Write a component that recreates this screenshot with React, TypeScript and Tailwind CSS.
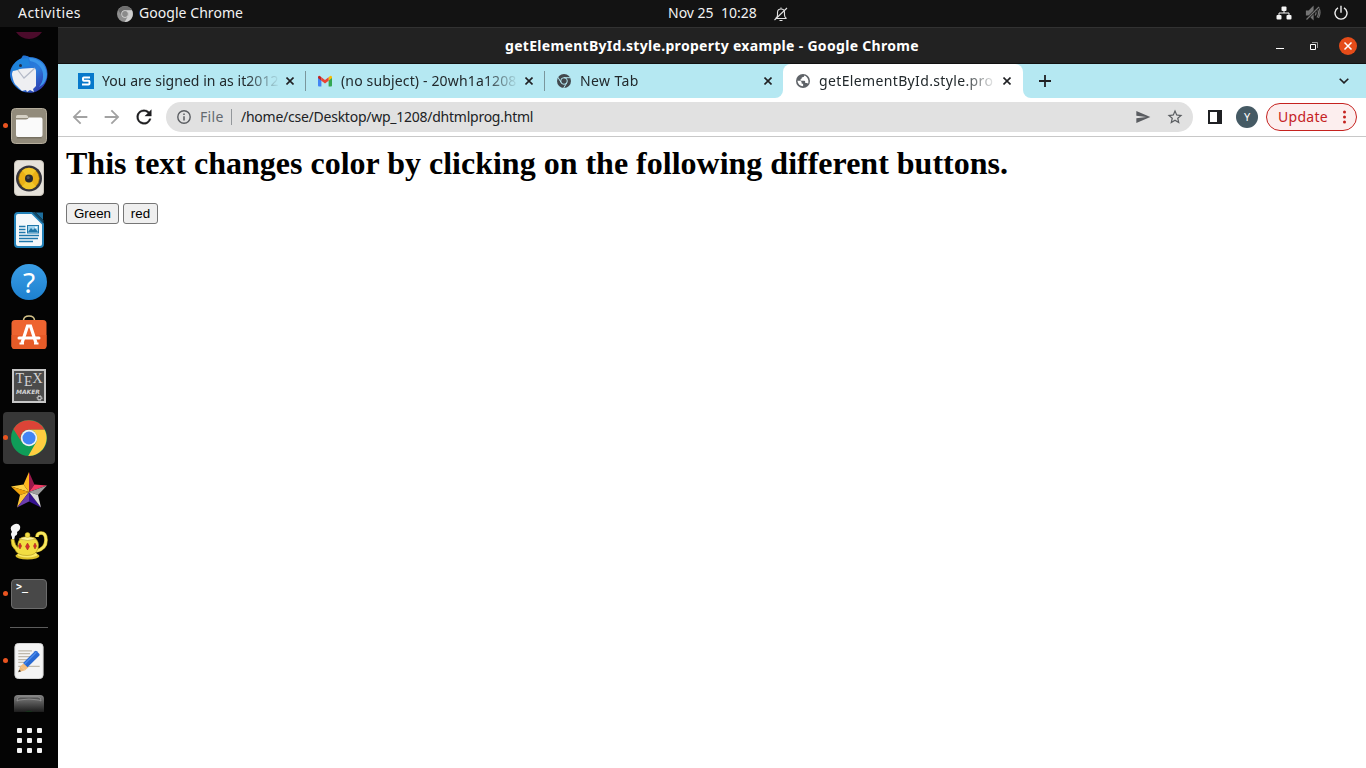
import type { ReactNode } from "react";

const UI = "font-['Noto_Sans',sans-serif]";

function ChromeLogo({ size, mono = false }: { size: number; mono?: boolean }) {
  const c = mono
    ? ["#6e6e6e", "#cfcfcf", "#8e8e8e", "#d9d9d9", "#8a8a8a"]
    : ["#db4437", "#ffcd40", "#0f9d58", "#f1f1f1", "#4285f4"];
  return (
    <svg width={size} height={size} viewBox="0 0 48 48">
      <circle cx="24" cy="24" r="24" fill={c[2]} />
      <path d="M3.2 12A24 24 0 0 1 44.8 13H24a11 11 0 0 0-9.6 16.5z" fill={c[0]} />
      <path d="M44.8 13A24 24 0 0 1 23 48l10.5-18.500A11 11 0 0 0 24 13z" fill={c[1]} />
      <circle cx="24" cy="24" r="11" fill={c[3]} />
      <circle cx="24" cy="24" r="8.700" fill={c[4]} />
    </svg>
  );
}

function DockItem({ children, running = false, active = false }: { children: ReactNode; running?: boolean; active?: boolean }) {
  return (
    <div className="relative flex h-[52px] w-full shrink-0 items-center justify-center">
      {active && <div className="absolute inset-y-0 left-[3px] w-[52px] rounded-[4px] bg-[#373737]" />}
      {running && <div className="absolute left-[3px] top-[23px] h-[5px] w-[5px] rounded-full bg-[#e95420]" />}
      <div className="relative">{children}</div>
    </div>
  );
}

function Thunderbird() {
  return (
    <svg width="40" height="40" viewBox="0 0 40 40" className="block">
      <defs>
        <linearGradient id="tb" x1="0" y1="0" x2="1" y2="1">
          <stop offset="0" stopColor="#1c6fd0" />
          <stop offset=".55" stopColor="#2b7bdc" />
          <stop offset="1" stopColor="#30209a" />
        </linearGradient>
      </defs>
      <path d="M14 1.500c3 0 5 .5 6 1.500C31 3 38.500 10 38.500 20c0 10-6 16-14 18.500-9 1-14-2-18-6C2 28 0 22 1.500 16 3 11 7 7 11 5c2-1 2-2.500 3-3.500z" fill="url(#tb)" />
      <path d="M21 7c8 1 14 8 13 16 0 4-2 7-4 10 6-3 8-8 8-13C37 10 29 4 20 4z" fill="#3b96ea" />
      <path d="M3 21c0-4 2-6 5-6l15-1c3 0 4 1 4 3v15l-3 3 1 3-4-2-3 2-1-2-4 1-5-5c-3-2-4-6-5-11z" fill="#eeeff2" />
      <path d="m8 15 7 9 11-10" fill="none" stroke="#b4bac8" strokeWidth="1.200" />
      <path d="M11 5c-5 3-8 7-8 12 3 0 6-1 10-3 2-1 4-2 8-2l-2-8z" fill="#1f83da" />
      <circle cx="11.500" cy="11.500" r="1.500" fill="#252d45" />
    </svg>
  );
}

function Files() {
  return (
    <svg width="38" height="38" viewBox="0 0 38 38" className="block">
      <rect x="1.500" y="1.500" width="35" height="35" rx="4" fill="#928b7b" stroke="#b4ac9b" />
      <path d="M6 11V9.500Q6 8 7.500 8H16q1.500 0 2 1.500l.5 1.500z" fill="#d6d1c5" />
      <path d="M6 12.500h10q2 0 3-2h12q1.500 0 1.500 2V28q0 2-2 2H8q-2 0-2-2z" fill="#fafafa" />
      <path d="M7 30.800h24.500" stroke="#6b6557" />
    </svg>
  );
}

function Rhythmbox() {
  return (
    <svg width="30" height="36" viewBox="0 0 30 36" className="block">
      <rect x=".5" y=".5" width="29" height="35" rx="3.500" fill="#e6e2da" stroke="#c9c4b9" />
      <circle cx="15" cy="18.500" r="13" fill="#34343c" />
      <circle cx="15" cy="18.500" r="10.500" fill="#eab116" stroke="#735611" strokeWidth=".7" />
      <path d="M15 18.500 8 10.500a10.500 10.500 0 0 1 14 0zM15 18.500l7 8a10.500 10.500 0 0 1-14 0z" fill="#f2c72a" />
      <circle cx="15" cy="18.500" r="4" fill="#282a2e" />
      <circle cx="14.200" cy="17.500" r="1.500" fill="#50545a" />
    </svg>
  );
}

function Writer() {
  return (
    <svg width="30" height="36" viewBox="0 0 30 36" className="block">
      <path d="M4 1h14l11 11v20q0 3-3 3H4q-3 0-3-3V4q0-3 3-3z" fill="#f4f8fb" stroke="#2381b8" strokeWidth="2" />
      <path d="M21.500 .5h7.500v7.500z" fill="#1d6d9c" />
      <path d="m18 0 11.500 11.500V8.500L21 0z" fill="#134866" />
      <g stroke="#1f78ac" strokeWidth="1.300">
        <path d="M5 14.500h6.500M5 17.500h6.500M5 20.500h6.500M5 23.500h20M5 26.500h19M5 29.500h14" />
      </g>
      <rect x="13.500" y="13.500" width="11" height="7.500" fill="#9fd3ee" stroke="#2178aa" />
      <path d="m14 20 3-4 2 2 2-2 3 4z" fill="#2076a8" />
      <circle cx="22" cy="15.500" r="1" fill="#fff" />
    </svg>
  );
}

function Software() {
  return (
    <svg width="38" height="38" viewBox="0 0 38 38" className="block">
      <path d="M13.500 7V5Q14 1 19 1t5.500 4v2" fill="none" stroke="#d6c58b" strokeWidth="1.600" />
      <rect x="1.500" y="5" width="35" height="29" rx="3.500" fill="#ee6430" />
      <path d="M1.500 20h35v10.500q0 3.500-3.500 3.500H5q-3.500 0-3.500-3.500z" fill="#e65b28" />
      <path d="m12 28 5.500-17h3l5.500 17" fill="none" stroke="#fff" strokeWidth="3.200" />
      <path d="M9 23h20" stroke="#fff" strokeWidth="3" strokeLinecap="round" />
      <path d="M9.500 28.500h4.500M24 28.500h4.500" stroke="#fff" strokeWidth="2" />
    </svg>
  );
}

function TexMaker() {
  return (
    <div className="flex h-[34px] w-[34px] flex-col border-2 border-[#c7c7c7] bg-[#4b4b4b] font-['Liberation_Serif',serif] text-[#d4d4d4]">
      <div className="flex justify-center pt-[1px] text-[14px] leading-[14px]">
        <span>T</span>
        <span className="pt-[3px]">E</span>
        <span>X</span>
      </div>
      <div className="pl-[2px] font-['DejaVu_Sans',sans-serif] text-[6px] font-bold italic leading-[6px]">MAKER</div>
      <svg className="ml-auto mr-[1px]" width="7" height="7" viewBox="0 0 7 7">
        <circle cx="3.500" cy="3.500" r="2" fill="none" stroke="#d5d5d5" strokeWidth="1.200" />
        <circle cx="3.500" cy="3.500" r="3" fill="none" stroke="#d5d5d5" strokeDasharray="1.200 1.150" />
      </svg>
    </div>
  );
}

function StarIcon() {
  return (
    <svg width="38" height="36" viewBox="0 0 38 36" className="block">
      <path d="m19 0-5.500 12.500L19 20z" fill="#ffb71e" />
      <path d="m19 0 5.500 12.500L19 20z" fill="#99184c" />
      <path d="m1 14.500 12.500-2L19 20z" fill="#ffd043" />
      <path d="m1 14.500 9 8.500 9-3z" fill="#eea10c" />
      <path d="m37 13.500-12.500-1L19 20z" fill="#f53a65" />
      <path d="m37 13.500-9 9.500-9-3z" fill="#9d9d9d" />
      <path d="m10 23-3 12.500L19 20z" fill="#ffc83a" />
      <path d="m7 35.500 12-6V20z" fill="#6b3cac" />
      <path d="M19 20v9.500l12 6z" fill="#35128f" />
      <path d="M31 35.500 28 23l-9-3z" fill="#dadada" />
    </svg>
  );
}

function Teapot() {
  return (
    <svg width="40" height="38" viewBox="0 0 40 38" className="block">
      <path d="M3 14q-2-3 0-5-3-5 1-7 5-3 7 1 1 4-3 6 1 3-2 4l-1 4H3z" fill="#f5f5f5" />
      <path d="M28 14q0-4 4-4 5 0 5 7 0 9-10 11" fill="none" stroke="#c4a920" strokeWidth="3.600" />
      <path d="M28 14q0-4 4-4 5 0 5 7 0 9-10 11" fill="none" stroke="#f8ea62" strokeWidth="2.400" />
      <ellipse cx="18.500" cy="33" rx="12" ry="3.500" fill="#dbbf28" />
      <ellipse cx="18.500" cy="31.500" rx="10" ry="3" fill="#faea68" />
      <path d="M2 16.500h3q1 6 4 8-1-7 4-10h12q6 4 4 11-2 7-11 7-10 0-12-6-4-3-4-10z" fill="#f2dd42" stroke="#b89e20" strokeWidth=".7" />
      <path d="M10 16q8-5 17 0-8 3-17 0z" fill="#fdf39b" stroke="#b89e20" strokeWidth=".6" />
      <circle cx="18.500" cy="12" r="2.500" fill="#f2dd42" stroke="#b89e20" strokeWidth=".5" />
      <path d="m11 20 1.600 3-1.600 3-1.500-3zM18.500 20l2 3.500-2 3.500-2-3.500zM26 20l1.500 3-1.500 3-1.500-3z" fill="#d72d2d" stroke="#9d2416" strokeWidth=".5" />
    </svg>
  );
}

function Editor() {
  return (
    <svg width="30" height="36" viewBox="0 0 30 37" className="block">
      <rect x=".5" y=".5" width="29" height="36" rx="3.500" fill="#f4f4f4" stroke="#d8d8d8" />
      <path d="M4 8h14M4 11h12M4 14h14M4 17h13M4 20h9M4 24h22" stroke="#bfb9ac" strokeWidth="1.300" />
      <path d="m4 30 2-6 5 4z" fill="#edb877" />
      <path d="m4 30 .8-2.500L7 29z" fill="#333" />
      <path d="m6 24 4-3.500 4.500 4.500-3.500 3z" fill="#f5bd7b" />
      <path d="M9 20.500 21 8.500q1-1 2 0l2.500 2.500q1 1 0 2l-12 12z" fill="#2869d3" />
      <path d="m10.500 21.500 12-12" stroke="#4b8bed" strokeWidth="1.500" />
    </svg>
  );
}

function Dock() {
  return (
    <aside className="flex w-[58px] shrink-0 flex-col items-center bg-[#040404]">
      <div className="flex h-[21px] w-full shrink-0 flex-col items-center pt-[5px]">
        <svg width="26" height="7" viewBox="0 0 26 7"><path d="M0 0h26q-5 7-13 7T0 0z" fill="#4b0b2b" /></svg>
      </div>
      <DockItem><Thunderbird /></DockItem>
      <DockItem running><Files /></DockItem>
      <DockItem><Rhythmbox /></DockItem>
      <DockItem><Writer /></DockItem>
      <DockItem>
        <div className="flex h-[36px] w-[36px] items-center justify-center rounded-full bg-linear-to-b from-[#3a9ee6] to-[#1c80cf] pb-[1px] font-['Noto_Sans',sans-serif] text-[28px] leading-none text-white">?</div>
      </DockItem>
      <DockItem><Software /></DockItem>
      <DockItem><TexMaker /></DockItem>
      <DockItem running active><div className="[&>svg]:block"><ChromeLogo size={36} /></div></DockItem>
      <DockItem><StarIcon /></DockItem>
      <DockItem><Teapot /></DockItem>
      <DockItem running>
        <div className="h-[30px] w-[36px] rounded-[4px] border border-[#6c6c6c] bg-[#484848] pl-[4px] pt-[2px] font-['DejaVu_Sans_Mono',monospace] text-[10px] font-bold leading-[10px] text-white">&gt;_</div>
      </DockItem>
      <div className="mb-[7px] mt-[7px] h-px w-[38px] shrink-0 bg-[#5c5c5c]" />
      <DockItem running><Editor /></DockItem>
      <div className="flex h-[25px] w-full shrink-0 justify-center overflow-hidden pt-[8px]">
        <svg width="30" height="17" viewBox="0 0 30 17">
          <defs><linearGradient id="disk" x1="0" y1="0" x2="0" y2="1"><stop stopColor="#858585" /><stop offset="1" stopColor="#1d1d1d" /></linearGradient></defs>
          <path d="M0 17V4q0-4 4-4h22q4 0 4 4v13z" fill="url(#disk)" />
          <path d="M3 6q0-4 3-4h18q3 0 3 4l-2-1q-10-2-20 0z" fill="#555" stroke="#9c9c9c" strokeWidth=".7" />
          <path d="M11 17q4-3 8 0z" fill="#16321b" />
        </svg>
      </div>
      <div className="mt-[16px] grid grid-cols-3 gap-[5px] pl-[1px]">
        {Array.from({ length: 9 }, (_, i) => (
          <span key={i} className="h-[5px] w-[5px] rounded-[1px] bg-[#f2f2f2]" />
        ))}
      </div>
    </aside>
  );
}

function TopBar() {
  return (
    <header className={`flex h-[27px] shrink-0 items-center bg-[#131313] pl-[18px] pr-[18px] text-[14px] leading-[26px] text-[#f2f2f2] ${UI}`}>
      <div className="flex w-[650px] shrink-0 items-center">
        <span className="w-[99px] pb-[1px] tracking-[0.47px]">Activities</span>
        <ChromeLogo size={16} mono />
        <span className="ml-[6px] pb-[1px] tracking-[0.05px]">Google Chrome</span>
      </div>
      <span className="w-[105px] shrink-0 whitespace-pre pb-[1px]">Nov 25  10:28</span>
      <svg className="shrink-0" width="16" height="16" viewBox="0 0 16 16" fill="none" stroke="#e2e2e2" strokeWidth="1.100">
        <path d="M2.500 12.500h11q-2-1-2-3.500V6.500Q11.500 3 8 3T4.500 6.500V9q0 2.500-2 3.500zM8 1.500V3M6.500 14.500h3M1.500 14 14 2" />
      </svg>
      <div className="flex flex-1 items-center justify-end gap-[13px] pb-[1px]">
        <svg width="16" height="16" viewBox="0 0 16 16" fill="#f5f5f5">
          <rect x="5.500" y="1.500" width="5" height="4.500" rx="1" /><rect x=".5" y="10" width="5" height="4.500" rx="1" /><rect x="10.500" y="10" width="5" height="4.500" rx="1" />
          <path d="M8 5v3M3 11V8h10v3" fill="none" stroke="#f5f5f5" />
        </svg>
        <svg width="16" height="16" viewBox="0 0 16 16" fill="none" stroke="#747474" strokeWidth="1.200">
          <path d="M1.500 6H4l4-4v12l-4-4H1.500z" fill="#747474" />
          <path d="M10 5.500q2 2.500 0 5M12 3.500q3 4.500 0 9M13.500 2q3 5.500 0 11" />
          <path d="M1.500 14.500 14 2" stroke="#131313" strokeWidth="2.500" /><path d="M1.500 14.500 14 2" />
        </svg>
        <svg width="14" height="16" viewBox="0 0 14 16" fill="none" stroke="#f0f0f0" strokeWidth="1.400">
          <path d="M4 2.900a6 6 0 1 0 6 0M7 .7v7" />
        </svg>
      </div>
    </header>
  );
}

function TitleBar() {
  return (
    <div className="flex h-[37px] shrink-0 items-center border-b border-t border-b-[#111] border-t-[#323232] bg-[#222]">
      <div className={`ml-[447px] flex-1 whitespace-nowrap text-[14px] font-bold tracking-[0.31px] text-white ${UI}`}>getElementById.style.property example - Google Chrome</div>
      <div className="flex items-center justify-end pr-[9px]">
        <svg width="8" height="8" viewBox="0 0 8 8"><path d="M0 6.500h8" stroke="#fff" /></svg>
        <svg className="ml-[26px]" width="8" height="8" viewBox="0 0 8 8" fill="none"><path d="M2 .5h5.500V6" stroke="#999" /><path d="M.5 2.500h5v5h-5z" stroke="#fff" /></svg>
        <svg className="ml-[21px]" width="18" height="18" viewBox="0 0 18 18"><circle cx="9" cy="9" r="9" fill="#e54c19" /><path d="m5.500 5.500 7 7m0-7-7 7" stroke="#fff" strokeWidth="1.500" /></svg>
      </div>
    </div>
  );
}

const favicons = {
  s: (
    <svg width="16" height="16" viewBox="0 0 16 16"><path d="M0 0h16v16H0z" fill="#0779cb" /><path d="M12 4.500H5.800Q5 4.500 5 5.300v1.500q0 .9.800.9h4.700q1 0 1 .9v2q0 .9-1 .9H4" fill="none" stroke="#fff" strokeWidth="2" /></svg>
  ),
  gmail: (
    <svg width="16" height="16" viewBox="0 0 16 16"><path d="M1 4v8.500q0 1 1 1h2.400V7z" fill="#4285f4" /><path d="M15 4v8.500q0 1-1 1h-2.400V7z" fill="#34a853" /><path d="M11.600 4.200 13 3q2-.8 2 1.500V5l-3.400 2.700z" fill="#fbbc04" /><path d="M4.400 4.200 8 7l3.600-2.800v3.500L8 10.400 4.400 7.700z" fill="#ea4335" /><path d="M4.400 4.200 3 3Q1 2.200 1 4.500V5l3.400 2.700z" fill="#c5221f" /></svg>
  ),
  chrome: (
    <svg width="16" height="16" viewBox="0 0 16 16"><circle cx="8" cy="8" r="7" fill="#42484d" /><circle cx="8" cy="8" r="3.300" fill="none" stroke="#b5e8f1" strokeWidth="1" /><path d="M8 4.700h6.500M5.100 9.600 1.900 4.200M10.900 9.600 7.700 15" stroke="#b5e8f1" strokeWidth="1" /></svg>
  ),
  globe: (
    <svg width="16" height="16" viewBox="0 0 16 16"><circle cx="8" cy="8" r="7" fill="#5f6368" /><path d="M9.300 2.500q.2 1.800-1.800 1.800-.9 0-.9 1.300-.2.700-1.200.8v1.300h3.800q1 .1 1 1.300v.9h1.500q.9.200 1.400.9.500-1.500.3-3-.6-4-4.100-5.300zM2.400 7.800h2.300q1.900.1 2 2v.9h1.400v2.500q-4.900-.2-5.700-5.400z" fill="#fff" /></svg>
  ),
};

function Tab({ icon, title, tracking, active = false, divider = false }: { icon: ReactNode; title: string; tracking: string; active?: boolean; divider?: boolean }) {
  return (
    <div className={`relative flex h-full shrink-0 items-center pl-[12px] ${active ? "w-[240px] rounded-t-[8px] bg-white" : "w-[239px]"}`}>
      {icon}
      <div className={`ml-[8px] w-[176px] overflow-hidden whitespace-nowrap text-[14px] leading-[20px] text-[#22292c] ${tracking} ${UI} mask-[linear-gradient(to_right,#000_144px,transparent_178px)]`}>{title}</div>
      <svg className="ml-[8px]" width="8" height="8" viewBox="0 0 8 8"><path d="m.5.5 7 7m0-7-7 7" stroke="#202124" strokeWidth="1.600" /></svg>
      {divider && <div className="absolute right-[-1px] top-[7px] h-[20px] w-px bg-[#7a969c]" />}
    </div>
  );
}

function TabStrip() {
  return (
    <div className="flex h-[34px] shrink-0 items-center bg-white">
      <div className="flex h-full w-[725px] items-center rounded-br-[8px] bg-[#b5e8f2] pl-[8px]">
        <Tab icon={favicons.s} title="You are signed in as it2012" tracking="tracking-[0.04px]" divider />
        <Tab icon={favicons.gmail} title="(no subject) - 20wh1a1208" tracking="tracking-[0.15px]" divider />
        <Tab icon={favicons.chrome} title="New Tab" tracking="tracking-[0.4px]" />
      </div>
      <div className="h-full bg-[#b5e8f2]"><Tab icon={favicons.globe} title="getElementById.style.pro" tracking="tracking-[0.36px]" active /></div>
      <div className="flex h-full flex-1 items-center justify-between rounded-bl-[8px] bg-[#b5e8f2] pl-[16px] pr-[17px]">
        <svg width="12" height="12" viewBox="0 0 12 12"><path d="M6 0v12M0 6h12" stroke="#202124" strokeWidth="1.800" /></svg>
        <svg width="10" height="6" viewBox="0 0 10 6"><path d="m.7.7 4.300 4.200L9.300.7" fill="none" stroke="#202124" strokeWidth="1.600" /></svg>
      </div>
    </div>
  );
}

function Toolbar() {
  return (
    <div className={`flex h-[39px] shrink-0 items-center border-b border-[#c8c8c8] bg-white pl-[11px] pr-[9px] text-[14px] ${UI}`}>
      <svg width="22" height="22" viewBox="0 0 24 24" fill="#a2a2a2"><path d="M20 11H7.830l5.590-5.590L12 4l-8 8 8 8 1.410-1.410L7.830 13H20z" /></svg>
      <svg className="ml-[10px]" width="22" height="22" viewBox="0 0 24 24" fill="#a2a2a2"><path d="m12 4-1.410 1.410L16.170 11H4v2h12.170l-5.580 5.590L12 20l8-8z" /></svg>
      <svg className="ml-[10px]" width="22" height="22" viewBox="0 0 24 24" fill="#1d1d1f" stroke="#1d1d1f" strokeWidth=".35"><path d="M17.650 6.350A7.960 7.960 0 0 0 12 4a8 8 0 1 0 7.730 10h-2.080A6 6 0 1 1 12 6c1.660 0 3.140.69 4.220 1.780L13 11h7V4z" /></svg>
      <div className="ml-[11px] flex h-[30px] w-[1027px] items-center rounded-full bg-[#e1e1e1] pl-[11px] pr-[9px]">
        <svg width="14" height="14" viewBox="0 0 14 14"><circle cx="7" cy="7" r="6.200" fill="none" stroke="#5a5d61" strokeWidth="1.400" /><path d="M7 6.200V10.500M7 3.500v1.500" stroke="#5a5d61" strokeWidth="1.500" /></svg>
        <span className="ml-[9px] w-[31px] pb-[2px] tracking-[0.3px] text-[#646a70]">File</span>
        <span className="h-[16px] w-px bg-[#93979b]" />
        <span className="ml-[9px] flex-1 whitespace-nowrap pb-[2px] tracking-[-0.25px] text-[#202124]">/home/cse/Desktop/wp_1208/dhtmlprog.html</span>
        <svg width="16" height="16" viewBox="0 0 24 24" fill="#5a5d61"><path d="M2 21 23 12 2 3v7l15 2-15 2z" /></svg>
        <svg className="ml-[15px]" width="18" height="18" viewBox="0 0 24 24" fill="#5a5d61"><path d="m22 9.240-7.190-.62L12 2 9.190 8.630 2 9.240l5.460 4.730L5.820 21 12 17.270 18.180 21l-1.630-7.030zM12 15.400l-3.760 2.270 1-4.280-3.320-2.880 4.380-.38L12 6.100l1.710 4.040 4.380.38-3.320 2.880 1 4.280z" /></svg>
      </div>
      <svg className="ml-[15px]" width="14" height="14" viewBox="0 0 14 14"><path d="M0 0h14v14H0zM2 2v10h7V2z" fill="#1f2023" fillRule="evenodd" /></svg>
      <div className="ml-[14px] flex h-[22px] w-[22px] items-center justify-center rounded-full bg-[#455a64] text-[11px] text-white">Y</div>
      <div className="ml-[8px] flex h-[28px] w-[91px] items-center justify-between rounded-full border border-[#c5221f] bg-[#fceeee] pl-[11px] pr-[10px] text-[#c5221f]">
        <span className="pb-[2px] tracking-[0.3px]">Update</span>
        <svg width="3" height="14" viewBox="0 0 3 14" fill="#c5221f"><circle cx="1.500" cy="2" r="1.500" /><circle cx="1.500" cy="7" r="1.500" /><circle cx="1.500" cy="12" r="1.500" /></svg>
      </div>
    </div>
  );
}

export default function App() {
  return (
    <div className="flex h-[768px] w-[1366px] flex-col overflow-hidden">
      <TopBar />
      <div className="flex min-h-0 flex-1">
        <Dock />
        <div className="flex flex-1 flex-col bg-white">
          <TitleBar />
          <TabStrip />
          <Toolbar />
          <main className="flex-1 px-[8px] pt-[8px] text-black">
            <h1 className="font-['Liberation_Serif',serif] text-[32px] font-bold leading-[37px]">This text changes color by clicking on the following different buttons.</h1>
            <div className="mt-[21px] flex gap-[4px] font-['Liberation_Sans',sans-serif] text-[13.333px] leading-[15px]">
              <button className="h-[21px] w-[53px] rounded-[3px] border border-[#767676] bg-[#efefef]">Green</button>
              <button className="h-[21px] w-[35px] rounded-[3px] border border-[#767676] bg-[#efefef]">red</button>
            </div>
          </main>
        </div>
      </div>
    </div>
  );
}
